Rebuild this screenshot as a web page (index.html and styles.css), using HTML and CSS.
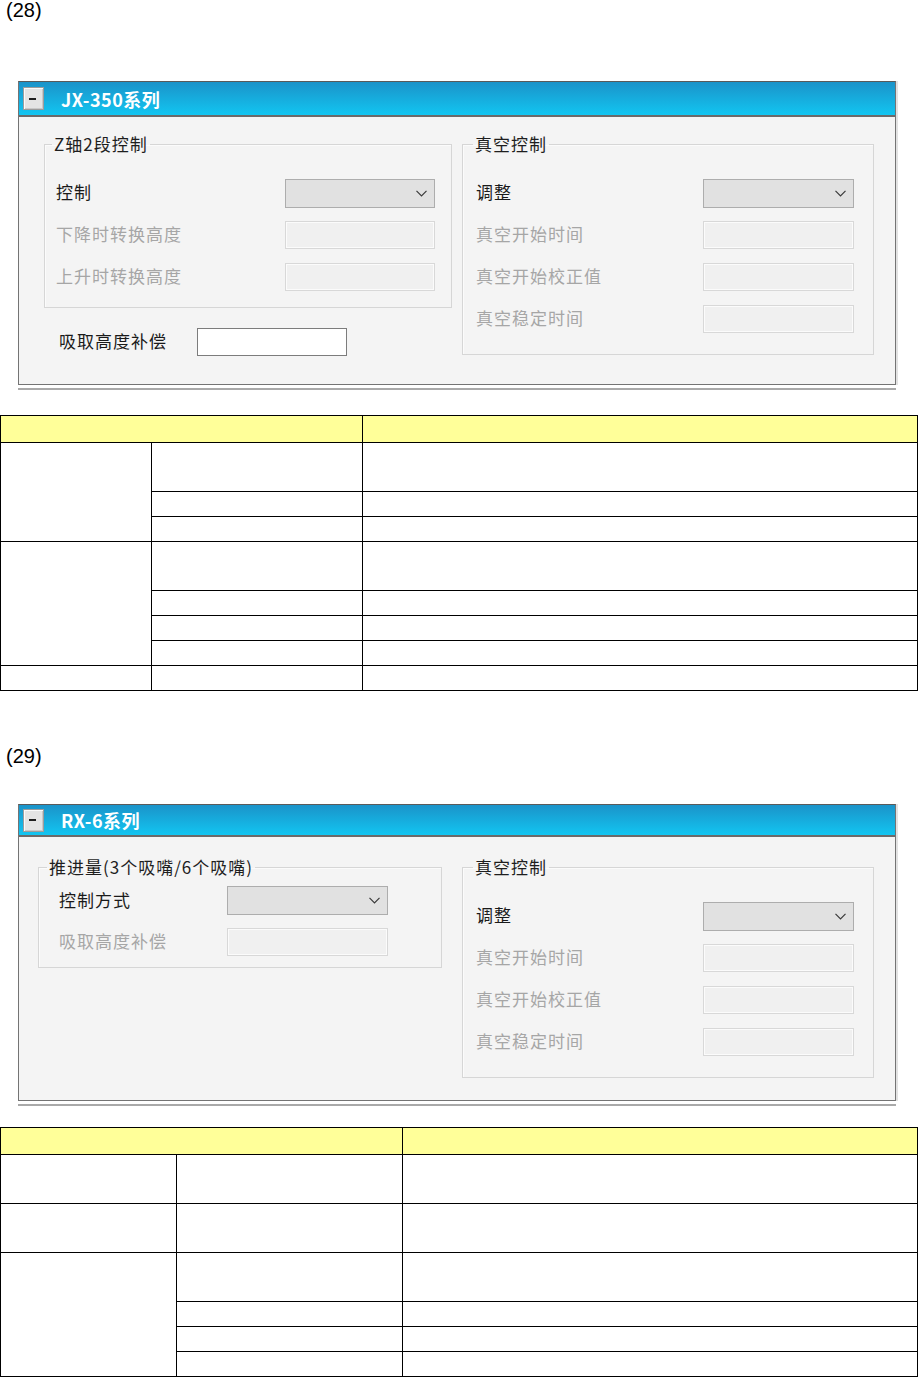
FILE: index.html
```html
<!doctype html>
<html lang="zh-CN">
<head>
  <meta charset="utf-8">
  <title>JX-350 / RX-6 设定</title>
  <link rel="stylesheet" href="styles.css">
</head>
<body>

  <p class="num">(28)</p>

  <div class="panel panel-jx">
    <div class="panel-head">
      <span class="collapse-btn"><span class="collapse-bar"></span></span>
      <span class="panel-title">JX-350系列</span>
    </div>
    <div class="panel-body">
      <div class="col">
        <fieldset class="group group-z">
          <legend>Z轴2段控制</legend>
          <div class="field">
            <span class="lbl">控制</span>
            <div class="combo"><svg width="11" height="7" viewBox="0 0 11 7"><polyline points="0.5,0.8 5.5,5.8 10.5,0.8" fill="none" stroke="#3a3a3a" stroke-width="1.2"/></svg></div>
          </div>
          <div class="field off">
            <span class="lbl">下降时转换高度</span>
            <div class="box"></div>
          </div>
          <div class="field off">
            <span class="lbl">上升时转换高度</span>
            <div class="box"></div>
          </div>
        </fieldset>
        <div class="field field-free">
          <span class="lbl">吸取高度补偿</span>
          <div class="box box-white"></div>
        </div>
      </div>
      <fieldset class="group group-vac">
        <legend>真空控制</legend>
        <div class="field">
          <span class="lbl">调整</span>
          <div class="combo"><svg width="11" height="7" viewBox="0 0 11 7"><polyline points="0.5,0.8 5.5,5.8 10.5,0.8" fill="none" stroke="#3a3a3a" stroke-width="1.2"/></svg></div>
        </div>
        <div class="field off">
          <span class="lbl">真空开始时间</span>
          <div class="box"></div>
        </div>
        <div class="field off">
          <span class="lbl">真空开始校正值</span>
          <div class="box"></div>
        </div>
        <div class="field off">
          <span class="lbl">真空稳定时间</span>
          <div class="box"></div>
        </div>
      </fieldset>
    </div>
  </div>

  <table class="spec spec-jx">
    <colgroup><col class="c1"><col class="c2"><col class="c3"></colgroup>
    <tr class="head"><th colspan="2"></th><th></th></tr>
    <tr class="tall"><td rowspan="3"></td><td></td><td></td></tr>
    <tr><td></td><td></td></tr>
    <tr><td></td><td></td></tr>
    <tr class="tall"><td rowspan="4"></td><td></td><td></td></tr>
    <tr><td></td><td></td></tr>
    <tr><td></td><td></td></tr>
    <tr><td></td><td></td></tr>
    <tr><td></td><td></td><td></td></tr>
  </table>

  <p class="num num-2">(29)</p>

  <div class="panel panel-rx">
    <div class="panel-head">
      <span class="collapse-btn"><span class="collapse-bar"></span></span>
      <span class="panel-title">RX-6系列</span>
    </div>
    <div class="panel-body">
      <fieldset class="group group-push">
        <legend>推进量(3个吸嘴/6个吸嘴)</legend>
        <div class="field">
          <span class="lbl">控制方式</span>
          <div class="combo"><svg width="11" height="7" viewBox="0 0 11 7"><polyline points="0.5,0.8 5.5,5.8 10.5,0.8" fill="none" stroke="#3a3a3a" stroke-width="1.2"/></svg></div>
        </div>
        <div class="field off">
          <span class="lbl">吸取高度补偿</span>
          <div class="box"></div>
        </div>
      </fieldset>
      <fieldset class="group group-vac">
        <legend>真空控制</legend>
        <div class="field">
          <span class="lbl">调整</span>
          <div class="combo"><svg width="11" height="7" viewBox="0 0 11 7"><polyline points="0.5,0.8 5.5,5.8 10.5,0.8" fill="none" stroke="#3a3a3a" stroke-width="1.2"/></svg></div>
        </div>
        <div class="field off">
          <span class="lbl">真空开始时间</span>
          <div class="box"></div>
        </div>
        <div class="field off">
          <span class="lbl">真空开始校正值</span>
          <div class="box"></div>
        </div>
        <div class="field off">
          <span class="lbl">真空稳定时间</span>
          <div class="box"></div>
        </div>
      </fieldset>
    </div>
  </div>

  <table class="spec spec-rx">
    <colgroup><col class="c1"><col class="c2"><col class="c3"></colgroup>
    <tr class="head"><th colspan="2"></th><th></th></tr>
    <tr class="tall"><td></td><td></td><td></td></tr>
    <tr class="tall"><td></td><td></td><td></td></tr>
    <tr class="tall"><td rowspan="4"></td><td></td><td></td></tr>
    <tr><td></td><td></td></tr>
    <tr><td></td><td></td></tr>
    <tr><td></td><td></td></tr>
  </table>

</body>
</html>
```

FILE: styles.css
```css
body {
  margin: 0;
  background: #fff;
  font-family: "Noto Sans CJK SC", "Liberation Sans", sans-serif;
}

.num {
  margin: 0;
  padding-left: 6px;
  font-family: "Liberation Sans", Arial, sans-serif;
  font-size: 20px;
  line-height: 20px;
  color: #000;
}

.num-2 {
  margin-top: 55px;
}

/* window panel */
.panel {
  width: 878px;
  margin-left: 18px;
  box-sizing: border-box;
  border: 1px solid #747474;
  border-top-color: #5a5a5a;
  background: #f4f4f4;
  box-shadow: 0 3px 0 #fff, 0 5px 0 #a9a9a9, 2px 0 0 #e2e2e2;
}

.panel-jx {
  margin-top: 61px;
}

.panel-rx {
  margin-top: 38px;
}

.panel-head {
  height: 33px;
  display: flex;
  align-items: center;
  padding-left: 4px;
  background: linear-gradient(#1b93c9, #12c5f1);
  border-bottom: 2px solid #6a6a6a;
}

.panel-rx .panel-head {
  height: 30px;
}

.collapse-btn {
  width: 21px;
  height: 23px;
  box-sizing: border-box;
  border: 1px solid #9c9c9c;
  background: #e4e4e4;
  box-shadow: inset 1px 1px 0 #fafafa, inset -1px -1px 0 #c8c8c8;
  display: flex;
  align-items: center;
  justify-content: center;
}

.collapse-bar {
  width: 7px;
  height: 2px;
  background: #1e1e1e;
  margin-left: -2px;
}

.panel-title {
  margin-left: 17px;
  color: #fff;
  font-size: 18px;
  font-weight: bold;
  line-height: 20px;
  letter-spacing: 0.5px;
}

.panel-body {
  display: grid;
  align-items: start;
}

.panel-jx .panel-body {
  grid-template-columns: 408px 412px;
  column-gap: 10px;
  padding: 17px 0 28px 25px;
}

.panel-rx .panel-body {
  grid-template-columns: 404px 412px;
  column-gap: 20px;
  padding: 20px 0 22px 19px;
}

/* group boxes */
.group {
  margin: 0;
  min-width: 0;
  border: 1px solid #d6d6d6;
  box-shadow: inset 1px 1px 0 #fbfbfb;
}

.group legend {
  padding: 0 2px;
  font-size: 17px;
  line-height: 20px;
  letter-spacing: 1px;
  color: #1e1e1e;
}

.group-z {
  padding: 18px 16px 9px 11px;
}

.group-z legend {
  margin-left: -4px;
}

.group-vac {
  padding: 18px 19px 14px 13px;
}

.group-vac legend {
  margin-left: -3px;
}

.group-push {
  padding: 3px 53px 5px 20px;
}

.group-push legend {
  margin-left: -12px;
}

.field {
  display: flex;
  align-items: center;
  height: 42px;
  font-size: 17px;
  letter-spacing: 1px;
  color: #1a1a1a;
}

.field .lbl {
  margin-top: -3px;
}

.group-push .field {
  height: 41px;
}

.field.off {
  color: #a6a6a6;
}

.lbl {
  flex: 1;
  white-space: nowrap;
}

.field-free {
  height: 28px;
  margin-top: 20px;
  padding-left: 15px;
}

.field-free .lbl {
  flex: none;
  width: 138px;
}

.combo {
  width: 150px;
  height: 29px;
  box-sizing: border-box;
  border: 1px solid #adadad;
  background: #e1e1e1;
  display: flex;
  align-items: center;
  justify-content: flex-end;
  padding-right: 7px;
}

.group-vac .combo,
.group-vac .box {
  width: 151px;
}

.group-push .combo,
.group-push .box {
  width: 161px;
}

.box {
  width: 150px;
  height: 28px;
  box-sizing: border-box;
  border: 1px solid #d8d8d8;
  background: #f0f0f0;
  box-shadow: inset 0 0 0 1px #fbfbfb;
}

.box-white {
  background: #fff;
  border-color: #7c7c7c;
  box-shadow: none;
}

/* spec tables */
.spec {
  width: 917px;
  border-collapse: collapse;
  table-layout: fixed;
}

.spec th,
.spec td {
  border: 1px solid #000;
  padding: 0;
}

.spec th {
  background: #ffff99;
}

.spec tr {
  height: 25px;
}

.spec tr.head {
  height: 27px;
}

.spec tr.tall {
  height: 49px;
}

.spec-jx {
  margin-top: 30px;
}

.spec-jx .c1 { width: 151px; }
.spec-jx .c2 { width: 211px; }
.spec-jx .c3 { width: 555px; }

.spec-rx {
  margin-top: 26px;
}

.spec-rx .c1 { width: 176px; }
.spec-rx .c2 { width: 226px; }
.spec-rx .c3 { width: 515px; }
```
